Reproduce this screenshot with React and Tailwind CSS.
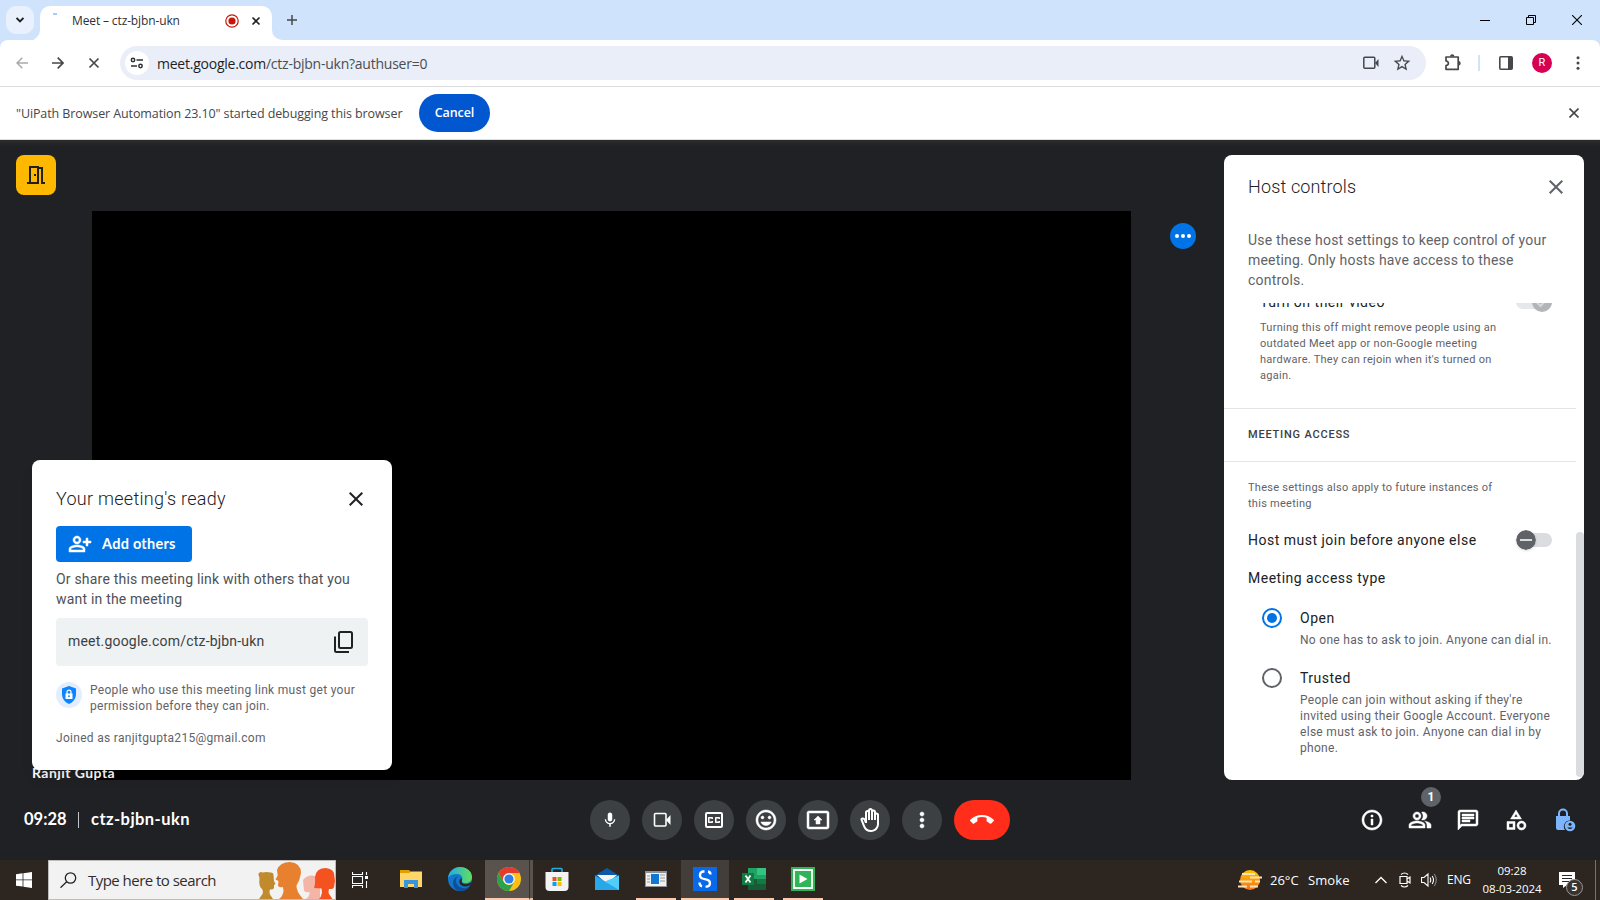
import React from 'react';
import {
  MdMic, MdOutlineClosedCaption, MdOutlineInsertEmoticon, MdOutlinePresentToAll,
  MdOutlineBackHand, MdMoreVert, MdCallEnd, MdOutlineInfo, MdOutlinePeopleAlt, MdOutlineChat,
  MdOutlineCategory, MdOutlineMeetingRoom, MdClose, MdOutlinePersonAddAlt, MdMoreHoriz,
  MdStarBorder,
} from 'react-icons/md';

const segoe = "font-['Open_Sans',sans-serif]";
const gsans = "font-[Lato,sans-serif] [font-variant-ligatures:none]";
const label = "font-[Roboto,sans-serif] text-[14px] leading-5 tracking-[0.5px] text-[#202124]";
const heavy = "h-6 w-6 [&_path]:stroke-white [&_path]:stroke-[0.5px] [&_path[fill=none]]:stroke-none";

function TabStrip() {
  return (
    <div className="flex h-10 bg-[#cfe3fc]">
      <div className="ml-1.5 mt-1.5 flex h-7 w-7 items-center justify-center rounded-[10px] bg-[#e9f1fe]">
        <svg className="h-1.5 w-2" viewBox="0 0 8 6"><path d="M.6 1L4 4.400 7.400 1" fill="none" stroke="#1f1f1f" strokeWidth="1.800" /></svg>
      </div>
      <svg className="mt-[30px] h-[10px] w-1.5 shrink-0" viewBox="0 0 6 10"><path d="M6 0V10H-4A10 10 0 0 0 6 0Z" fill="#fff" /></svg>
      <div className="mt-1.5 flex h-[34px] w-[232px] items-center rounded-t-[10px] bg-white">
        <div className="mb-[19px] ml-[13px] h-0.5 w-1 bg-[#a9cdf5]" />
        <span className={`-mt-[5px] ml-[15px] w-[153px] whitespace-nowrap text-[12px] tracking-[-0.13px] text-[#2f3033] ${segoe}`}>Meet – ctz-bjbn-ukn</span>
        <svg className="-mt-[5px] h-3.5 w-3.5" viewBox="0 0 14 14"><circle cx="7" cy="7" r="6.200" fill="none" stroke="#c5170b" strokeWidth="1.200" /><circle cx="7" cy="7" r="3.600" fill="#c5170b" /></svg>
        <svg className="-mt-[5px] ml-[12px] h-2.5 w-2.5" viewBox="0 0 10 10"><path d="M1.500 1.500l7 7M8.500 1.500l-7 7" stroke="#1f1f1f" strokeWidth="1.600" /></svg>
      </div>
      <svg className="mt-[30px] h-[10px] w-[10px] shrink-0" viewBox="0 0 10 10"><path d="M0 0V10H10A10 10 0 0 1 0 0Z" fill="#fff" /></svg>
      <svg className="ml-[5px] mt-[15px] h-[10px] w-[10px]" viewBox="0 0 10 10"><path d="M5 0V10M0 5H10" stroke="#45484c" strokeWidth="1.500" /></svg>
      <div className="flex-1" />
      <svg className="mr-[36px] mt-[15px] h-[11px] w-[10px]" viewBox="0 0 10 11"><path d="M0 5.500H10" stroke="#000" /></svg>
      <svg className="mr-[36px] mt-[15px] h-[10px] w-[10px]" viewBox="0 0 10 10"><path d="M.5 2.500h7v7h-7zM2.500 2.500v-2h7v7h-2" fill="none" stroke="#000" /></svg>
      <svg className="mr-[18px] mt-[15px] h-[10px] w-[10px]" viewBox="0 0 10 10"><path d="M0 0L10 10M10 0L0 10" stroke="#000" strokeWidth="1.100" /></svg>
    </div>
  );
}

function Toolbar() {
  return (
    <div className="h-[46px] bg-[#cfe3fc]">
      <div className="flex h-[46px] items-center rounded-t-[8px] bg-white">
        <svg className="ml-4 h-3 w-3" viewBox="0 0 12 12" fill="none" stroke="#a9aaab" strokeWidth="1.500"><path d="M12 6H1M6.300.7L1 6l5.300 5.300" /></svg>
        <svg className="ml-6 h-3 w-3" viewBox="0 0 12 12" fill="none" stroke="#45474a" strokeWidth="1.700"><path d="M0 6H11M5.700.7L11 6l-5.300 5.300" /></svg>
        <svg className="ml-6 h-3 w-3" viewBox="0 0 12 12" fill="none" stroke="#45474a" strokeWidth="1.700"><path d="M1.500 1.500l9 9M10.500 1.500l-9 9" /></svg>
        <div className="ml-5 flex h-[34px] w-[1306px] items-center rounded-full bg-[#e9eef8]">
          <div className="ml-[5px] flex h-6 w-6 items-center justify-center rounded-full bg-white">
            <svg className="h-3 w-3.5" viewBox="0 0 14 12" fill="none" stroke="#303134" strokeWidth="1.500"><circle cx="3" cy="3" r="1.700" /><path d="M6.500 3H13M1 9H7" /><circle cx="10.500" cy="9" r="1.700" /></svg>
          </div>
          <div className={`ml-2 whitespace-nowrap text-[14px] tracking-[-0.24px] text-[#4b4d51] ${segoe}`}><span className="text-[#1f1f1f]">meet.google.com</span>/ctz-bjbn-ukn?authuser=0</div>
          <div className="flex-1" />
          <svg className="mr-[13px] h-3.5 w-4" viewBox="0 0 16 14"><rect x=".8" y="1.300" width="11" height="11" rx="1" fill="none" stroke="#45474a" strokeWidth="1.500" /><path d="M12 7L15.500 3v8z" fill="#45474a" /></svg>
          <MdStarBorder className="mr-[14px] h-5 w-5 text-[#45474a]" />
        </div>
        <svg className="ml-[18px] h-[18px] w-[18px]" viewBox="0 0 18 18"><path d="M2 3H14.200V15.300H2V11.500C5.200 11 5.200 7.500 2 7Z" fill="none" stroke="#45474a" strokeWidth="1.700" strokeLinejoin="round" /><path d="M6 2.500a2.200 2.200 0 0 1 4.400 0zM14.500 7a2.200 2.200 0 0 1 0 4.400z" fill="#45474a" /></svg>
        <div className="ml-4 h-4 w-0.5 bg-[#cfe3fc]" />
        <svg className="ml-[19px] h-3.5 w-[14px]" viewBox="0 0 14 14"><rect x=".8" y=".8" width="12.400" height="12.400" rx="1" fill="none" stroke="#45474a" strokeWidth="1.600" /><path d="M9 1h4v12H9z" fill="#45474a" /></svg>
        <div className="ml-[19px] flex h-5 w-5 items-center justify-center rounded-full bg-[#d80052] font-[Roboto,sans-serif] text-[11px] text-white">R</div>
        <svg className="ml-6 h-3.5 w-1" viewBox="0 0 4 14" fill="#45474a"><circle cx="2" cy="1.700" r="1.500" /><circle cx="2" cy="7" r="1.500" /><circle cx="2" cy="12.300" r="1.500" /></svg>
      </div>
    </div>
  );
}

function InfoBar() {
  return (
    <div className="flex h-[54px] items-center border-y border-[#dcdddf] bg-white">
      <span className={`ml-4 mt-0.5 w-[403px] whitespace-nowrap text-[12.500px] tracking-[-0.1px] text-[#45474a] ${segoe}`}>"UiPath Browser Automation 23.10" started debugging this browser</span>
      <div className={`flex h-[38px] w-[71px] items-center justify-center rounded-full bg-[#0057d0] pt-px text-[12.500px] font-semibold tracking-[-0.1px] text-white ${segoe}`}>Cancel</div>
      <svg className="ml-auto mr-[21px] h-[10px] w-[10px]" viewBox="0 0 10 10"><path d="M.5.5l9 9M9.500.5l-9 9" stroke="#45474a" strokeWidth="1.600" /></svg>
    </div>
  );
}

function HostPanel() {
  return (
    <aside className="ml-7 flex h-[625px] w-[360px] flex-col overflow-hidden rounded-lg bg-white font-[Roboto,sans-serif] text-[#5f6368]">
      <div className="flex h-[75px] items-start justify-between pl-6 pr-4 pt-5">
        <h2 className="font-[Roboto,sans-serif] text-[18px] font-light leading-6 tracking-[0.15px] text-[#202124]">Host controls</h2>
        <MdClose className="h-6 w-6" />
      </div>
      <p className="h-[73px] whitespace-nowrap pl-6 text-[14px] leading-5 tracking-[0.2px]">Use these host settings to keep control of your<br />meeting. Only hosts have access to these<br />controls.</p>
      <div className="flex h-[477px] overflow-hidden">
        <div className="w-[352px]">
          <div className="-mt-[11px] flex h-7 justify-between pl-9 pr-6">
            <span className={label}>Turn on their video</span>
            <div className="flex h-5 w-9 items-center justify-end">
              <div className="-mr-5 h-3.5 w-9 shrink-0 rounded-full bg-[#e6e7e9]" />
              <svg className="relative h-5 w-5 shrink-0" viewBox="0 0 20 20"><circle cx="10" cy="10" r="10" fill="#b3b4b6" /><path d="M5 10.500l3.500 3.500 6.500-7" stroke="#d6d7d8" strokeWidth="2" fill="none" /></svg>
            </div>
          </div>
          <p className="h-[88px] whitespace-nowrap pl-9 text-[11px] leading-4 tracking-[0.27px]">Turning this off might remove people using an<br />outdated Meet app or non-Google meeting<br />hardware. They can rejoin when it's turned on<br />again.</p>
          <div className="flex h-[54px] items-center border-y border-[#e3e4e6] pl-6 text-[11px] font-medium tracking-[0.8px] text-[#3c4043]">MEETING ACCESS</div>
          <p className="mt-[18px] whitespace-nowrap pl-6 text-[11px] leading-4 tracking-[0.27px]">These settings also apply to future instances of<br />this meeting</p>
          <div className="mt-[18px] flex h-5 items-center justify-between pl-6 pr-6">
            <span className={label}>Host must join before anyone else</span>
            <div className="flex items-center">
              <svg className="relative z-10 h-5 w-5 rounded-full shadow-sm" viewBox="0 0 20 20"><circle cx="10" cy="10" r="10" fill="#5f6368" /><path d="M4 10H16" stroke="#dadce0" strokeWidth="2" /></svg>
              <div className="-ml-1 h-3.5 w-5 rounded-r-full bg-[#dadce0]" />
            </div>
          </div>
          <div className={`mt-[18px] pl-6 ${label}`}>Meeting access type</div>
          <div className="mt-5 flex pl-[38px]">
            <svg className="h-5 w-5" viewBox="0 0 20 20"><circle cx="10" cy="10" r="9" fill="none" stroke="#0073e6" strokeWidth="2" /><circle cx="10" cy="10" r="5" fill="#0073e6" /></svg>
            <div className="ml-[18px]">
              <div className={label}>Open</div>
              <p className="mt-1 whitespace-nowrap text-[12px] leading-4 tracking-[0.3px]">No one has to ask to join. Anyone can dial in.</p>
            </div>
          </div>
          <div className="mt-5 flex pl-[38px]">
            <svg className="h-5 w-5" viewBox="0 0 20 20"><circle cx="10" cy="10" r="9" fill="none" stroke="#5f6368" strokeWidth="2" /></svg>
            <div className="ml-[18px]">
              <div className={label}>Trusted</div>
              <p className="mt-1 whitespace-nowrap text-[12px] leading-4 tracking-[0.3px]">People can join without asking if they're<br />invited using their Google Account. Everyone<br />else must ask to join. Anyone can dial in by<br />phone.</p>
            </div>
          </div>
        </div>
        <div className="mt-[229px] h-[245px] w-2 rounded-full bg-[#dadce0]" />
      </div>
    </aside>
  );
}

function ReadyCard() {
  return (
    <div className="absolute left-8 top-[320px] h-[310px] w-[360px] rounded-lg bg-white pl-6 pt-[27px] font-[Roboto,sans-serif] shadow-lg">
      <div className="flex items-center justify-between pr-6">
        <h2 className="font-[Roboto,sans-serif] text-[18px] font-light leading-6 tracking-[0.28px] text-[#202124]">Your meeting's ready</h2>
        <MdClose className="h-6 w-6 text-[#202124]" />
      </div>
      <div className="mt-[15px] flex h-9 w-[136px] items-center rounded bg-[#0073e6] text-white">
        <MdOutlinePersonAddAlt className={`ml-3 ${heavy}`} />
        <span className={`-mt-px ml-2.5 whitespace-nowrap text-[14.500px] font-bold tracking-[0.25px] ${gsans}`}>Add others</span>
      </div>
      <p className="mt-[7px] whitespace-nowrap text-[14px] leading-5 tracking-[0.2px] text-[#4d5156]">Or share this meeting link with others that you<br />want in the meeting</p>
      <div className="mt-[9px] flex h-12 w-[312px] items-center justify-between rounded bg-[#eef2f3] px-3 text-[14px] tracking-[0.2px] text-[#3c4043]">
        <span className="-mt-0.5">meet.google.com/ctz-bjbn-ukn</span>
        <svg className="h-6 w-6" viewBox="0 0 24 24" fill="none" stroke="#202124" strokeWidth="2"><rect x="7" y="2" width="13" height="16" rx="1.500" /><path d="M3 6.500V20.500Q3 22 4.500 22H17" /></svg>
      </div>
      <div className="mt-4 flex text-[12px] leading-4 tracking-[0.3px] text-[#5f6368]">
        <div className="flex h-[26px] w-[26px] items-center justify-center rounded-full bg-[#e3edfd]">
          <svg className="h-[18px] w-3.5" viewBox="0 0 14 18"><path d="M7 0L14 2.600V8C14 12.500 11 16.500 7 18 3 16.500 0 12.500 0 8V2.600Z" fill="#0a84ff" /><rect x="3.500" y="7.500" width="7" height="5.500" fill="#fff" /><path d="M5 8V6.200a2 2 0 0 1 4 0V8" fill="none" stroke="#fff" strokeWidth="1.200" /><circle cx="7" cy="10.200" r=".9" fill="#0a84ff" /></svg>
        </div>
        <p className="ml-2 whitespace-nowrap">People who use this meeting link must get your<br />permission before they can join.</p>
      </div>
      <p className="mt-4 text-[12px] leading-4 tracking-[0.3px] text-[#5f6368]">Joined as ranjitgupta215@gmail.com</p>
    </div>
  );
}

const round = 'flex h-10 w-10 items-center justify-center rounded-full bg-[#3c4043]';

function BottomBar() {
  return (
    <div className="flex h-20 items-center text-white">
      <div className={`-mt-0.5 flex w-[590px] items-center pl-6 text-[16.500px] font-bold ${gsans}`}>
        <span className="w-[54px]">09:28</span>
        <span className="mr-3 mt-0.5 h-4 w-px bg-[#c4c6c9]" />
        <span className="tracking-[0.45px]">ctz-bjbn-ukn</span>
      </div>
      <div className="flex gap-3">
        <div className={round}><MdMic className="h-[18px] w-[18px]" /></div>
        <div className={round}>
          <svg className="h-4 w-[18px]" viewBox="0 0 18 16"><rect x="1.500" y="1.500" width="11.500" height="12.500" rx="1" fill="none" stroke="#fff" strokeWidth="1.600" /><path d="M13 8L17.500 3v10z" fill="#fff" /></svg>
        </div>
        <div className={round}><MdOutlineClosedCaption className="h-6 w-6" /></div>
        <div className={round}><MdOutlineInsertEmoticon className={heavy} /></div>
        <div className={round}><MdOutlinePresentToAll className={heavy} /></div>
        <div className={round}><MdOutlineBackHand className="h-6 w-6" /></div>
        <div className={round}><MdMoreVert className={heavy} /></div>
        <div className="flex h-10 w-14 items-center justify-center rounded-full bg-[#ff2d1a]"><MdCallEnd className="h-6 w-6" /></div>
      </div>
      <div className="ml-[350px] flex gap-6">
        <MdOutlineInfo className={heavy} />
        <div className="relative">
          <MdOutlinePeopleAlt className={heavy} />
          <span className="absolute -top-[21px] left-[13px] flex h-5 w-5 items-center justify-center rounded-full bg-[#5f6368] font-[Roboto,sans-serif] text-[12px] font-bold">1</span>
        </div>
        <MdOutlineChat className={heavy} />
        <MdOutlineCategory className={heavy} />
        <svg className="ml-0.5 h-6 w-6" viewBox="0 0 24 24"><path d="M2 8H16V12.500A6 6 0 0 0 11 22H4a2 2 0 0 1-2-2Z" fill="#7cb5fb" /><path d="M5 9V5.500a4 4 0 0 1 8 0V9" fill="none" stroke="#7cb5fb" strokeWidth="2" /><circle cx="16" cy="18" r="5.300" fill="#7cb5fb" /><circle cx="16" cy="16.200" r="1.500" fill="#202124" /><path d="M13.200 19.400h5.600q-2.800 3-5.600 0" fill="#202124" /></svg>
      </div>
    </div>
  );
}

function SearchBox() {
  return (
    <div className="flex h-10 w-[288px] items-center border border-[#bdbcbb] bg-[#f2f2f2]">
      <svg className="ml-[11px] h-4 w-[17px]" viewBox="0 0 17 16" fill="none" stroke="#222" strokeWidth="1.300"><circle cx="10.500" cy="6" r="5.200" /><path d="M6.700 9.800L.5 15.700" /></svg>
      <span className={`ml-[11px] w-[168px] whitespace-nowrap text-[15px] tracking-[-0.53px] text-[#2e2e2e] ${segoe}`}>Type here to search</span>
      <svg className="ml-0.5 h-[38px] w-[77px]" viewBox="0 0 77 38">
        <path d="M1 15a2.500 2.500 0 0 1 3.500-3.500q4-1 8 0A2.500 2.500 0 0 1 15.500 14l.5 6 1.500 3-1.500 1v3q-1 2-4 1.500-1 2 0 5l3 4.500H1l3.500-5q1-3-.5-5Q.5 25 1.500 18z" fill="#c08a2d" />
        <path d="M19 9Q22 1 32 1q11 1 11 11-1 7-4.500 12.500Q38 30 45 38H21q4-3 4.500-8l-.5-4q-4.500 1-5-1.500l.5-4.500-3-1.500 2.200-4z" fill="#e8812f" />
        <path d="M45 19q3-4.500 9-4.500 7 0 8 6v17.500H48q4-3 3.500-7-5 1-5.500-1.500z" fill="#f5b5a6" />
        <path d="M57 16q1-9 11-9 9 1 8.500 9l.5 4-1 6q-.5 2.500-5 2-1 3 0 5l3.500 5H61q4-4 2.500-10.500L56 27q1.500-4 1-11z" fill="#f4531f" />
      </svg>
    </div>
  );
}

const cell = 'flex h-10 w-12 items-center justify-center border-b-2 border-transparent';

function Taskbar() {
  return (
    <div className={`flex h-10 items-center bg-[#2c2520] text-white ${segoe}`}>
      <div className="flex w-12 justify-center"><svg className="h-4 w-4" viewBox="0 0 16 16" fill="#fff"><path d="M0 2.200L6.600 1.300V7.500H0zM7.400 1.200L16 0V7.500H7.400zM0 8.300H6.600V14.600L0 13.700zM7.400 8.300H16V16L7.400 14.800z" /></svg></div>
      <SearchBox />
      <div className="flex w-12 justify-center"><svg className="h-4 w-4" viewBox="0 0 16 16" fill="none" stroke="#fff" strokeWidth="1.100"><path d="M.5 0V2.500H10.500V0M.5 16V13.500H10.500V16M.5 4.500H10.500V11.500H.5zM14.500 0V3M14.500 9V16" /><path d="M13 4h3v3h-3z" fill="#fff" stroke="none" /></svg></div>
      <div className="ml-[3px] flex">
        <div className={cell}><svg className="h-[18px] w-[22px]" viewBox="0 0 22 18"><path d="M0 0H9l2 2v4H0z" fill="#e0a100" /><path d="M0 3H9l2-1.500H22V17H0z" fill="#ffd667" /><path d="M4 18V10h14v8h-4v-4H8v4z" fill="#3b95dd" /></svg></div>
        <div className={`${cell} w-[50px]`}><svg className="h-6 w-6" viewBox="0 0 24 24"><defs><linearGradient id="eg" x1="0" x2="1"><stop offset="0" stopColor="#24a9e8" /><stop offset="1" stopColor="#62df5c" /></linearGradient></defs><circle cx="12" cy="12" r="12" fill="#1277c9" /><path d="M0 11C1 4 6 0 12 0c7 0 12 4.500 12 10 0 4-3 6-6 6-4 0-5-1.500-4-3 1-2 0-5-4-6-4-.5-8 1-10 4z" fill="url(#eg)" /><path d="M10 9c-4 4-2 11 5 12 3 .5 5-.5 7-2-3 5-9 6-13 4C3 20 4 11 10 9z" fill="#0c4f9b" /><path d="M14 13c-1 2 0 4 4 4.200 2 0 4-1 5.500-2.500L22.500 18c-4 2.500-10 1.500-11-2-.5-2 .5-4 2-5z" fill="#2c2520" /></svg></div>
        <div className="flex h-10 w-11 items-center justify-center border-b-2 border-[#fccbab] bg-[#5a524d] pl-1"><svg className="h-6 w-6" viewBox="0 0 24 24"><circle cx="12" cy="12" r="12" fill="#fbc116" /><path d="M1.600 6A12 12 0 0 1 22.400 6H12A6 6 0 0 0 6.800 15z" fill="#e33b2e" /><path d="M1.600 6A12 12 0 0 0 12 24L17.200 15A6 6 0 0 1 6.800 15z" fill="#2ba24c" /><circle cx="12" cy="12" r="5.800" fill="#fff" /><circle cx="12" cy="12" r="4.600" fill="#2f7de9" /></svg></div>
        <div className="h-10 w-1 border-b-2 border-l border-b-[#e9bda0] border-l-[#35302c] bg-[#5a524d]" />
        <div className={cell}><svg className="h-6 w-6" viewBox="0 0 24 24"><path d="M7 6V2.500Q7 1.500 8 1.500H16Q17 1.500 17 2.500V6" fill="none" stroke="#1fb0e8" strokeWidth="1.600" /><path d="M.5 5H23.500V20Q23.500 24 19.500 24H4.500Q.5 24 .5 20z" fill="#f3f3f3" /><path d="M7.500 10h4v4h-4z" fill="#f25022" /><path d="M12.500 10h4v4h-4z" fill="#7fba00" /><path d="M7.500 15h4v4h-4z" fill="#00a4ef" /><path d="M12.500 15h4v4h-4z" fill="#ffb900" /></svg></div>
        <div className={`${cell} w-[51px]`}><svg className="h-6 w-6" viewBox="0 0 24 24"><path d="M0 8.500L12 1 24 8.500V14H0z" fill="#0c59a8" /><path d="M2 8H22L12 17z" fill="#f5f5f5" /><path d="M0 8.500L12 15.500 24 8.500V23H0z" fill="#28a8ea" /><path d="M24 8.500V23L10 14.500z" fill="#50cdf8" /></svg></div>
        <div className="ml-1 mr-[5px] flex h-10 w-10 items-center justify-center border-b-2 border-[#fccbab]"><svg className="h-4 w-[22px]" viewBox="0 0 22 16"><path d="M0 0H22V16H0z" fill="#8f9194" /><path d="M1 2H21V15H1z" fill="#f1f1f1" /><path d="M6 3h8v10H6z" fill="#0f78d4" /><path d="M2 5h3M2 8h3M2 11h3M15 4h5M15 7h5M15 10h5" stroke="#999" /></svg></div>
        <div className="flex h-10 w-12 items-center justify-center border-b-2 border-[#fccbab] bg-[#443e3b]"><svg className="h-6 w-6" viewBox="0 0 24 24"><path d="M0 0H24V24H0z" fill="#0869ea" /><path d="M11.500 4.500H10A3.600 3.600 0 0 0 9.500 11.500L14.500 12.800A3.500 3.500 0 0 1 14 19.600H12.500M15 4.500Q17.500 5 17.500 7.500M6.500 15.500Q6.500 18.500 9 19.300" fill="none" stroke="#fff" strokeWidth="2.300" /></svg></div>
        <div className="ml-[5px] mr-[9px] flex h-10 w-10 items-center justify-center border-b-2 border-[#fccbab]"><svg className="h-[22px] w-6" viewBox="0 0 24 22"><path d="M6 0H24V22H6z" fill="#21a366" /><path d="M15 0h9v7h-9z" fill="#33c481" /><path d="M6 11H24V22H6z" fill="#185c37" /><path d="M15 11h9v5h-9z" fill="#107c41" /><path d="M0 5H12V17H0z" fill="#107c41" /><path d="M3.500 7.500l5 7M8.500 7.500l-5 7" stroke="#fff" strokeWidth="1.800" /></svg></div>
        <div className="flex h-10 w-10 items-center justify-center border-b-2 border-[#fccbab]"><svg className="h-6 w-6" viewBox="0 0 24 24"><path d="M0 0H24V24H0z" fill="#2fb457" /><path d="M3 3H21V21H3z" fill="none" stroke="#fff" strokeWidth="1.800" /><path d="M8.500 7.500L16.500 12 8.500 16.500z" fill="#fff" /></svg></div>
      </div>
      <div className="flex-1" />
      <svg className="h-[22px] w-6" viewBox="0 0 24 22"><defs><linearGradient id="sun" x2="0" y2="1"><stop stopColor="#ffc400" /><stop offset="1" stopColor="#f5701e" /></linearGradient></defs><circle cx="12" cy="11" r="10" fill="url(#sun)" /><path d="M4 5H17M12 8.500H24M1 12.500H14M17 12.500h5M0 17.500H9M12 17.500h8" stroke="#fbe3b4" strokeWidth="1.800" /></svg>
      <span className="ml-[8px] mt-px w-[38px] whitespace-nowrap text-[13px]">26°C</span>
      <span className="mt-px w-[67px] text-[13px] tracking-[0.1px]">Smoke</span>
      <svg className="h-2 w-3" viewBox="0 0 12 8" fill="none" stroke="#fff" strokeWidth="1.300"><path d="M.5 7L6 1.500 11.500 7" /></svg>
      <svg className="ml-3 h-4 w-3" viewBox="0 0 12 16" fill="none" stroke="#fff" strokeWidth="1.200"><path d="M2 2.500Q5.500-.5 9 2.500M2 13.500q3.500 3 7 0M1 4.500H8V11.500H1zM8 7l3-2v6l-3-2" /></svg>
      <svg className="ml-2.5 h-4 w-4" viewBox="0 0 16 16" fill="none" stroke="#fff" strokeWidth="1.100"><path d="M.5 5.500H3L7 2v12L3 10.500H.5zM9 5.500q1.500 2.500 0 5M11.200 4q2.600 4 0 8" /><path d="M13.300 2q4 6 0 12" stroke="#888" /></svg>
      <span className="ml-2.5 w-[35px] text-[12px] tracking-[-0.2px]">ENG</span>
      <div className="flex w-[60px] flex-col whitespace-nowrap text-center text-[11.500px] leading-[18px] tracking-[-0.1px]"><span>09:28</span><span>08-03-2024</span></div>
      <div className="relative ml-[17px] mr-5 h-4 w-4">
        <svg className="h-4 w-4" viewBox="0 0 16 16"><path d="M0 0H16V13H8L4 16V13H0z" fill="#fff" /><path d="M3 3.500H13M3 6.500H13M3 9.500H10" stroke="#2c2520" strokeWidth="1.200" /></svg>
        <span className="absolute left-[7px] top-[7px] flex h-[17px] w-[17px] items-center justify-center rounded-full border border-[#9a9795] bg-[#38332f] text-[11px] font-semibold">5</span>
      </div>
      <div className="mr-1 h-10 w-px bg-[#77726f]" />
    </div>
  );
}

export default function App() {
  return (
    <div className="h-[900px] w-[1600px] overflow-hidden bg-[#202124]">
      <TabStrip />
      <Toolbar />
      <InfoBar />
      <main className="relative h-[720px] bg-[#202124]">
        <div className="flex h-[640px] bg-[linear-gradient(#2a2b2d,#202124_7px)] pl-4 pt-[15px]">
          <div className="flex h-10 w-10 items-center justify-center rounded-lg bg-[#ffb800]"><MdOutlineMeetingRoom className="h-6 w-6 text-[#202124]" /></div>
          <div className={`ml-9 mt-14 h-[569px] w-[1039px] bg-black ${gsans}`}>
            <span className="-ml-[60px] mt-[552px] block text-[14px] font-bold leading-[20px] tracking-[0.45px] text-white">Ranjit Gupta</span>
          </div>
          <div className="ml-[39px] mt-[68px] flex h-[26px] w-[26px] items-center justify-center rounded-full bg-[#0073e6]"><svg className="h-1 w-4" viewBox="0 0 16 4" fill="#fff"><circle cx="2" cy="2" r="2" /><circle cx="8" cy="2" r="2" /><circle cx="14" cy="2" r="2" /></svg></div>
          <HostPanel />
        </div>
        <BottomBar />
        <ReadyCard />
      </main>
      <Taskbar />
    </div>
  );
}
